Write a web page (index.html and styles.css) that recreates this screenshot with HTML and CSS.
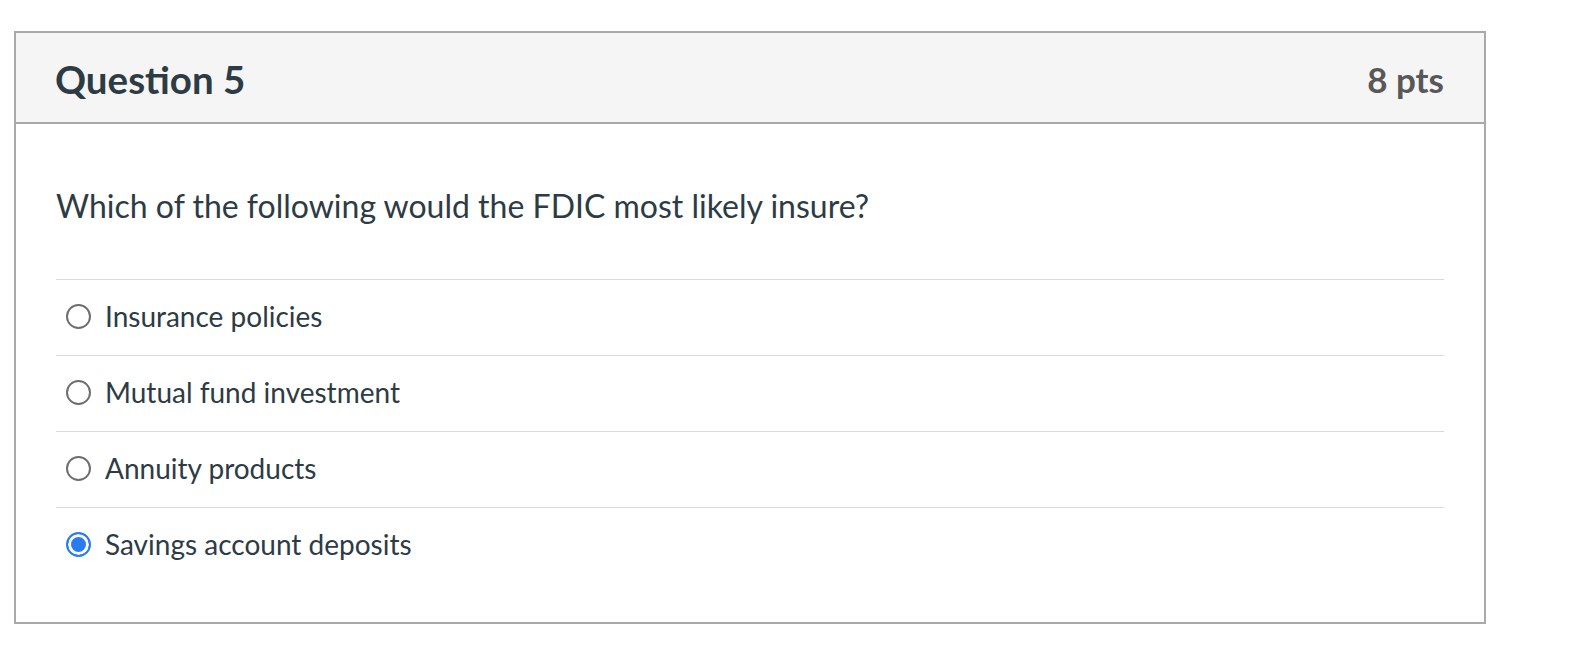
FILE: index.html
```html
<!DOCTYPE html>
<html lang="en">
<head>
<meta charset="utf-8">
<title>Question 5</title>
<link rel="stylesheet" href="styles.css">
</head>
<body>
<div class="page">
  <div class="question">
    <div class="header">
      <h2 class="title">Question 5</h2>
      <div class="points">8 pts</div>
    </div>
    <div class="content">
      <p class="prompt">Which of the following would the FDIC most likely insure?</p>
      <div class="answers">
        <label class="answer">
          <span class="radio"></span>
          <span class="label">Insurance policies</span>
        </label>
        <label class="answer">
          <span class="radio"></span>
          <span class="label">Mutual fund investment</span>
        </label>
        <label class="answer">
          <span class="radio"></span>
          <span class="label">Annuity products</span>
        </label>
        <label class="answer">
          <span class="radio checked"></span>
          <span class="label">Savings account deposits</span>
        </label>
      </div>
    </div>
  </div>
</div>
</body>
</html>
```

FILE: styles.css
```css
* { box-sizing: border-box; }
html, body { margin: 0; padding: 0; background: #fff; }
body { font-family: Lato, "Noto Sans", sans-serif; color: #2d3b45; }

.page { padding: 31px 0 0 14px; }

.question {
  width: 1472px;
  border: 2px solid #a9a9a9;
  background: #fff;
}

.header {
  height: 91px;
  background: #f5f5f5;
  border-bottom: 2px solid #a9a9a9;
  display: flex;
  align-items: center;
  justify-content: space-between;
  padding: 2px 40px 0 39px;
}

.title {
  margin: 0;
  font-size: 38.5px;
  font-weight: 700;
  color: #2d3b45;
}

.points {
  font-size: 35px;
  font-weight: 700;
  color: #585858;
}

.content {
  padding: 0 40px 39px 40px;
}

.prompt {
  margin: 0;
  padding-top: 62px;
  height: 155px;
  font-size: 32px;
  line-height: 40px;
}

.answers { display: flex; flex-direction: column; }

.answer {
  height: 76px;
  border-top: 1px solid #dadada;
  display: flex;
  align-items: center;
  gap: 14px;
  padding: 0 0 3px 10px;
  font-size: 28px;
}

.radio {
  width: 25px;
  height: 25px;
  border-radius: 50%;
  border: 2px solid #6e6e6e;
  flex: none;
}

.radio.checked {
  border: 2px solid #2b7bf0;
  background: #2b7bf0;
  box-shadow: inset 0 0 0 3px #fff;
}

.label { line-height: 36px; }
```
